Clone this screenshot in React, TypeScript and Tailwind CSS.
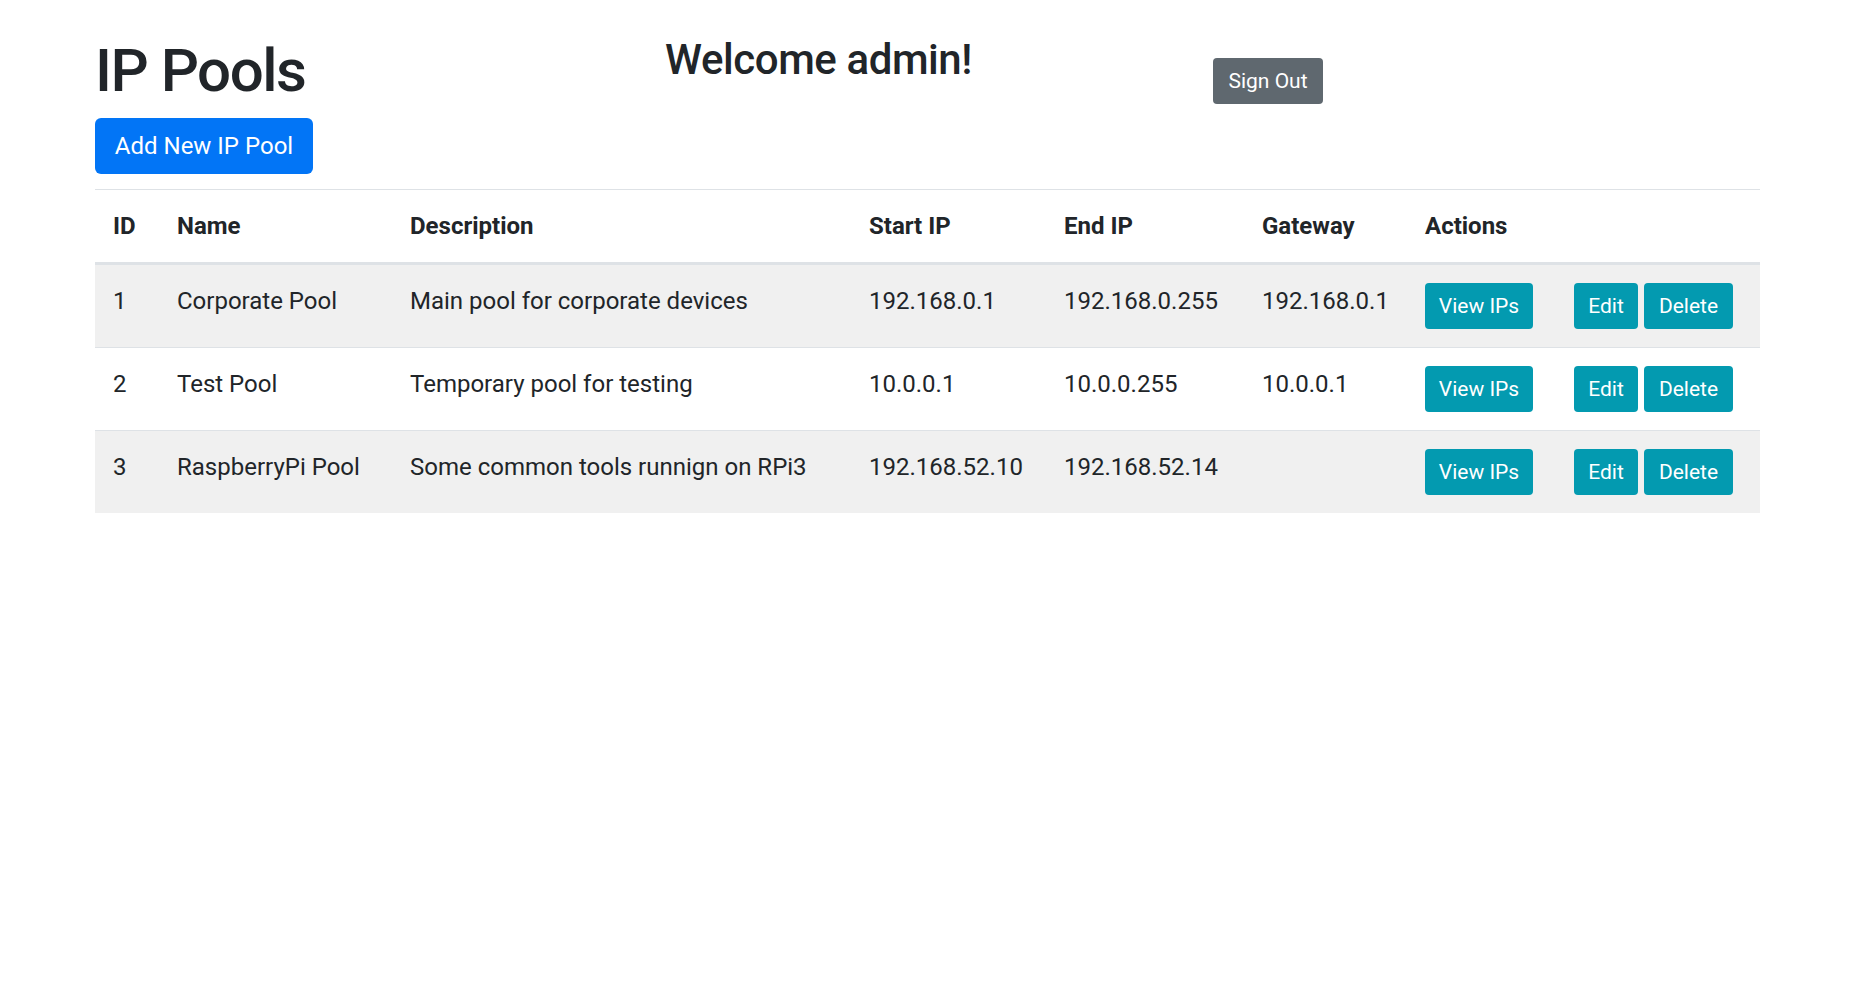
import { JSX } from "react";

interface IpPool {
  id: number;
  name: string;
  description: string;
  startIp: string;
  endIp: string;
  gateway: string;
}

const pools: IpPool[] = [
  { id: 1, name: "Corporate Pool", description: "Main pool for corporate devices", startIp: "192.168.0.1", endIp: "192.168.0.255", gateway: "192.168.0.1" },
  { id: 2, name: "Test Pool", description: "Temporary pool for testing", startIp: "10.0.0.1", endIp: "10.0.0.255", gateway: "10.0.0.1" },
  { id: 3, name: "RaspberryPi Pool", description: "Some common tools runnign on RPi3", startIp: "192.168.52.10", endIp: "192.168.52.14", gateway: "" },
];

const headers = ["ID", "Name", "Description", "Start IP", "End IP", "Gateway", "Actions", ""];
const colWidths = [64, 233, 459, 195, 198, 163, 149, 204];

const smallBtn =
  "h-[46px] inline-flex items-center justify-center rounded-[4px] text-[21px] leading-none text-white";

const App = (): JSX.Element => {
  return (
    <div
      className="min-h-screen bg-white text-[#212529] pl-[95px]"
      style={{ fontFamily: "Roboto, 'Liberation Sans', sans-serif" }}
    >
      {/* Header */}
      <div className="flex items-start">
        <div className="w-[570px] pt-[35px]">
          <h1 className="text-[60px] leading-[72px] font-medium tracking-[-0.025em] mb-[11px]">IP Pools</h1>
          <button className="w-[218px] h-[56px] rounded-[6px] bg-[#0275f6] text-white text-[24px] leading-none flex items-center justify-center">
            Add New IP Pool
          </button>
        </div>
        <div className="w-[548px] pt-[35px]">
          <h3 className="text-[42px] leading-[50px] font-medium tracking-[-0.01em]">Welcome admin!</h3>
        </div>
        <div className="pt-[58px]">
          <button className={`${smallBtn} w-[110px] bg-[#5f686f]`}>Sign Out</button>
        </div>
      </div>

      {/* Table */}
      <table className="mt-[15px] w-[1665px] table-fixed border-separate border-spacing-0 text-[24px] leading-[36px]">
        <colgroup>
          {colWidths.map((w, i) => (
            <col key={i} style={{ width: w }} />
          ))}
        </colgroup>
        <thead>
          <tr>
            {headers.map((h, i) => (
              <th
                key={i}
                className="text-left font-bold px-[18px] py-[18px] border-t border-b-[3px] border-[#dee2e6] align-bottom"
              >
                {h}
              </th>
            ))}
          </tr>
        </thead>
        <tbody>
          {pools.map((pool, idx) => {
            const rowBg = idx % 2 === 0 ? "bg-[#f0f0f0]" : "bg-white";
            const border = idx === 0 ? "" : "border-t border-[#dee2e6]";
            const td = `px-[18px] py-[18px] align-top ${border}`;
            return (
              <tr key={pool.id} className={rowBg}>
                <td className={td}>{pool.id}</td>
                <td className={td}>{pool.name}</td>
                <td className={td}>{pool.description}</td>
                <td className={td}>{pool.startIp}</td>
                <td className={td}>{pool.endIp}</td>
                <td className={td}>{pool.gateway}</td>
                <td className={td}>
                  <button className={`${smallBtn} w-[108px] bg-[#039ab0]`}>View IPs</button>
                </td>
                <td className={td}>
                  <div className="flex gap-[6px]">
                    <button className={`${smallBtn} w-[64px] bg-[#039ab0]`}>Edit</button>
                    <button className={`${smallBtn} w-[89px] bg-[#039ab0]`}>Delete</button>
                  </div>
                </td>
              </tr>
            );
          })}
        </tbody>
      </table>
    </div>
  );
};

export default App;
